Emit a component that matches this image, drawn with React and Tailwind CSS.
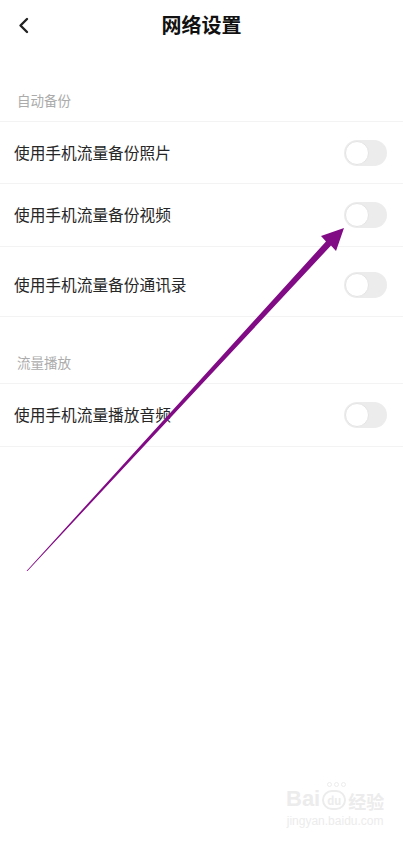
import { useState } from "react";

const font = { fontFamily: '"Noto Sans CJK SC", "Noto Sans", sans-serif' };

function Toggle({ on, onClick }) {
  return (
    <button
      onClick={onClick}
      className={`relative w-[43px] h-[26px] rounded-full ${on ? "bg-[#7a3cff]" : "bg-[#ececec]"}`}
    >
      <span
        className={`absolute top-[1px] size-[24px] rounded-full bg-white border border-[#e4e4e4] ${on ? "left-[18px]" : "left-[1px]"}`}
      />
    </button>
  );
}

function SectionLabel({ text, height }) {
  return (
    <div className={`flex items-end pb-[14px] px-[17px] border-b border-[#f3f3f3] ${height}`}>
      <span className="text-[13.5px] text-[#ababab] leading-none">{text}</span>
    </div>
  );
}

function Row({ text, height, on, onToggle }) {
  return (
    <div className={`flex items-center justify-between pl-[14px] pr-[16px] border-b border-[#f3f3f3] ${height}`}>
      <span className="text-[15.7px] text-[#262626] leading-none">{text}</span>
      <Toggle on={on} onClick={onToggle} />
    </div>
  );
}

export default function App() {
  const [flags, setFlags] = useState([false, false, false, false]);
  const flip = (i) => setFlags(flags.map((f, j) => (j === i ? !f : f)));

  return (
    <div className="relative w-[403px] h-[850px] bg-white overflow-hidden" style={font}>
      <header className="relative flex items-center justify-center h-[50px]">
        <svg className="absolute left-[17px] top-[17px]" width="14" height="17" viewBox="0 0 14 17">
          <path d="M10 2 L3.5 8.5 L10 15" fill="none" stroke="#222" strokeWidth="2.4" strokeLinecap="round" strokeLinejoin="round" />
        </svg>
        <h1 className="text-[20px] font-bold text-[#111] leading-none">网络设置</h1>
      </header>

      <SectionLabel text="自动备份" height="h-[72px]" />
      <Row text="使用手机流量备份照片" height="h-[62px]" on={flags[0]} onToggle={() => flip(0)} />
      <Row text="使用手机流量备份视频" height="h-[63px]" on={flags[1]} onToggle={() => flip(1)} />
      <Row text="使用手机流量备份通讯录" height="h-[70px] pt-[7px]" on={flags[2]} onToggle={() => flip(2)} />
      <SectionLabel text="流量播放" height="h-[67px]" />
      <Row text="使用手机流量播放音频" height="h-[63px]" on={flags[3]} onToggle={() => flip(3)} />

      {/* annotation arrow */}
      <svg className="absolute inset-0 pointer-events-none" width="403" height="850" viewBox="0 0 403 850">
        <polygon
          points="26.5,571 326,241.5 321,236 344,228 336,251 331,245.5 27.5,571"
          fill="#810a85"
        />
      </svg>

      {/* watermark */}
      <div className="absolute left-[286px] top-[788px] flex flex-col items-center text-[#ececec] pointer-events-none">
        <div className="flex items-end gap-[2px]">
          <span className="text-[22px] font-bold leading-none" style={{ fontFamily: '"Liberation Sans", sans-serif' }}>Bai</span>
          <span className="relative flex items-center justify-center w-[24px] h-[20px] rounded-full border-2 border-[#ececec] text-[11px] font-bold leading-none">
            du
            <span className="absolute -top-[10px] left-[3px] flex gap-[2px]">
              <span className="size-[5px] rounded-full border border-[#ececec]" />
              <span className="size-[5px] rounded-full border border-[#ececec]" />
              <span className="size-[5px] rounded-full border border-[#ececec]" />
            </span>
          </span>
          <span className="text-[18px] font-bold leading-none">经验</span>
        </div>
        <span className="text-[12px] leading-none mt-[5px]" style={{ fontFamily: '"Liberation Sans", sans-serif' }}>jingyan.baidu.com</span>
      </div>
    </div>
  );
}
